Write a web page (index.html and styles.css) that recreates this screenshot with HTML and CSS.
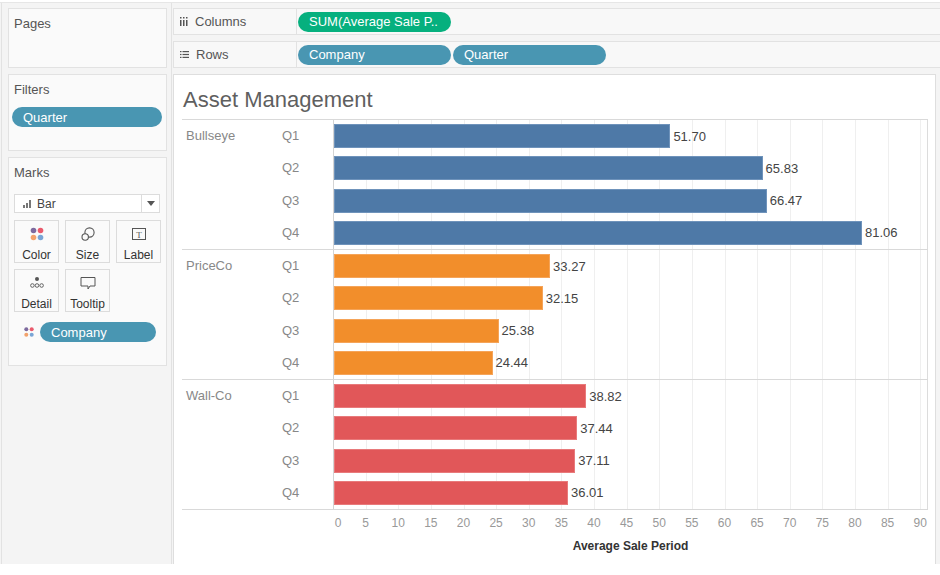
FILE: index.html
```html
<!DOCTYPE html>
<html lang="en">
<head>
    <meta charset="UTF-8">
    <title>Asset Management</title>
    <link rel="stylesheet" href="styles.css">
</head>
<body>
    <div class="app">
        <aside class="sidebar">
            <section class="card pages">
                <h3>Pages</h3>
            </section>
            <section class="card filters">
                <h3>Filters</h3>
                <div class="pill dim filter-pill">Quarter</div>
            </section>
            <section class="card marks">
                <h3>Marks</h3>
                <div class="mark-type">
                    <svg class="mt-icon" width="10" height="8" viewBox="0 0 10 8">
                        <rect x="0" y="5" width="2" height="3" fill="#777"/>
                        <rect x="3" y="3" width="2" height="5" fill="#777"/>
                        <rect x="6" y="0" width="2" height="8" fill="#777"/>
                    </svg>
                    <span class="mt-name">Bar</span>
                    <span class="mt-caret"><svg width="8" height="5" viewBox="0 0 8 5"><path d="M0 0H8L4 5Z" fill="#555"/></svg></span>
                </div>
                <div class="mark-btns">
                    <div class="mbtn">
                        <svg width="14" height="14" viewBox="0 0 14 14">
                            <circle cx="3.5" cy="3.5" r="2.8" fill="#7d6a9e"/>
                            <circle cx="10.5" cy="3.5" r="2.8" fill="#ea5a6c"/>
                            <circle cx="3.5" cy="10.5" r="2.8" fill="#f2a26c"/>
                            <circle cx="10.5" cy="10.5" r="2.8" fill="#79a5d6"/>
                        </svg>
                        <span>Color</span>
                    </div>
                    <div class="mbtn">
                        <svg width="14" height="14" viewBox="0 0 14 14">
                            <circle cx="8.5" cy="5.5" r="4.6" fill="none" stroke="#555" stroke-width="1.1"/>
                            <circle cx="4.2" cy="10" r="3.2" fill="#fafafa" stroke="#555" stroke-width="1.1"/>
                        </svg>
                        <span>Size</span>
                    </div>
                    <div class="mbtn">
                        <svg width="14" height="14" viewBox="0 0 14 14">
                            <rect x="0.5" y="1.5" width="13" height="11" fill="none" stroke="#555" stroke-width="1"/>
                            <text x="7" y="10.5" text-anchor="middle" font-family="Liberation Serif, serif" font-size="9" fill="#555">T</text>
                        </svg>
                        <span>Label</span>
                    </div>
                    <div class="mbtn">
                        <svg width="14" height="14" viewBox="0 0 14 14">
                            <circle cx="7" cy="3" r="2" fill="#555"/>
                            <circle cx="2.4" cy="9.5" r="1.8" fill="none" stroke="#555" stroke-width="0.9"/>
                            <circle cx="7" cy="9.5" r="1.8" fill="none" stroke="#555" stroke-width="0.9"/>
                            <circle cx="11.6" cy="9.5" r="1.8" fill="none" stroke="#555" stroke-width="0.9"/>
                        </svg>
                        <span>Detail</span>
                    </div>
                    <div class="mbtn">
                        <svg width="16" height="14" viewBox="0 0 16 14">
                            <path d="M1 1.5H15V10H10L8 13V10H1Z" fill="none" stroke="#555" stroke-width="1" stroke-linejoin="round"/>
                        </svg>
                        <span>Tooltip</span>
                    </div>
                </div>
                <div class="mark-field">
                    <svg width="10" height="10" viewBox="0 0 10 10">
                        <circle cx="2.3" cy="2.3" r="2" fill="#7d6a9e"/>
                        <circle cx="7.7" cy="2.3" r="2" fill="#ea5a6c"/>
                        <circle cx="2.3" cy="7.7" r="2" fill="#f2a26c"/>
                        <circle cx="7.7" cy="7.7" r="2" fill="#79a5d6"/>
                    </svg>
                    <div class="pill dim field-pill">Company</div>
                </div>
            </section>
        </aside>

        <main class="main">
            <div class="shelf">
                <div class="shelf-label">
                    <svg width="8" height="9" viewBox="0 0 8 9">
                        <rect x="0" y="0" width="1.5" height="1.5" fill="#555"/>
                        <rect x="0" y="3" width="1.5" height="6" fill="#555"/>
                        <rect x="3" y="0" width="1.5" height="1.5" fill="#555"/>
                        <rect x="3" y="3" width="1.5" height="6" fill="#555"/>
                        <rect x="6" y="0" width="1.5" height="1.5" fill="#555"/>
                        <rect x="6" y="3" width="1.5" height="6" fill="#555"/>
                    </svg>
                    <span>Columns</span>
                </div>
                <div class="shelf-pills">
                    <span class="pill measure">SUM(Average Sale P..</span>
                </div>
            </div>
            <div class="shelf">
                <div class="shelf-label">
                    <svg width="9" height="7" viewBox="0 0 9 7">
                        <rect x="0" y="0" width="1.5" height="1.2" fill="#555"/>
                        <rect x="2.5" y="0" width="6.5" height="1.2" fill="#555"/>
                        <rect x="0" y="2.9" width="1.5" height="1.2" fill="#555"/>
                        <rect x="2.5" y="2.9" width="6.5" height="1.2" fill="#555"/>
                        <rect x="0" y="5.8" width="1.5" height="1.2" fill="#555"/>
                        <rect x="2.5" y="5.8" width="6.5" height="1.2" fill="#555"/>
                    </svg>
                    <span>Rows</span>
                </div>
                <div class="shelf-pills">
                    <span class="pill dim">Company</span>
                    <span class="pill dim">Quarter</span>
                </div>
            </div>

            <div class="sheet">
                <h1 class="title">Asset Management</h1>
                <div class="viz">
                    <div class="group blue">
                        <div class="company">Bullseye</div>
                        <div class="quarter">Q1</div>
                        <div class="plot"><div class="bar" style="width: 336.4px"></div><span class="val">51.70</span></div>
                        <div class="quarter">Q2</div>
                        <div class="plot"><div class="bar" style="width: 428.6px"></div><span class="val">65.83</span></div>
                        <div class="quarter">Q3</div>
                        <div class="plot"><div class="bar" style="width: 432.8px"></div><span class="val">66.47</span></div>
                        <div class="quarter">Q4</div>
                        <div class="plot"><div class="bar" style="width: 528px"></div><span class="val">81.06</span></div>
                    </div>
                    <div class="group orange">
                        <div class="company">PriceCo</div>
                        <div class="quarter">Q1</div>
                        <div class="plot"><div class="bar" style="width: 216.1px"></div><span class="val">33.27</span></div>
                        <div class="quarter">Q2</div>
                        <div class="plot"><div class="bar" style="width: 208.8px"></div><span class="val">32.15</span></div>
                        <div class="quarter">Q3</div>
                        <div class="plot"><div class="bar" style="width: 164.6px"></div><span class="val">25.38</span></div>
                        <div class="quarter">Q4</div>
                        <div class="plot"><div class="bar" style="width: 158.5px"></div><span class="val">24.44</span></div>
                    </div>
                    <div class="group red">
                        <div class="company">Wall-Co</div>
                        <div class="quarter">Q1</div>
                        <div class="plot"><div class="bar" style="width: 252.3px"></div><span class="val">38.82</span></div>
                        <div class="quarter">Q2</div>
                        <div class="plot"><div class="bar" style="width: 243.3px"></div><span class="val">37.44</span></div>
                        <div class="quarter">Q3</div>
                        <div class="plot"><div class="bar" style="width: 241.2px"></div><span class="val">37.11</span></div>
                        <div class="quarter">Q4</div>
                        <div class="plot"><div class="bar" style="width: 234px"></div><span class="val">36.01</span></div>
                    </div>
                </div>
                <div class="axis">
                    <span class="tick first">0</span>
                    <span class="tick">5</span>
                    <span class="tick">10</span>
                    <span class="tick">15</span>
                    <span class="tick">20</span>
                    <span class="tick">25</span>
                    <span class="tick">30</span>
                    <span class="tick">35</span>
                    <span class="tick">40</span>
                    <span class="tick">45</span>
                    <span class="tick">50</span>
                    <span class="tick">55</span>
                    <span class="tick">60</span>
                    <span class="tick">65</span>
                    <span class="tick">70</span>
                    <span class="tick">75</span>
                    <span class="tick">80</span>
                    <span class="tick">85</span>
                    <span class="tick">90</span>
                </div>
                <div class="axis-title">Average Sale Period</div>
            </div>
        </main>
    </div>
</body>
</html>
```

FILE: styles.css
```css
body {
    margin: 0;
    background-color: #fff;
    font-family: "Liberation Sans", Arial, sans-serif;
    font-size: 13px;
    color: #555;
}
.app {
    display: flex;
    height: 562px;
    margin-top: 2px;
    border-top: 1px solid #e6e6e6;
    background-color: #f4f4f4;
    box-sizing: border-box;
}

/* left column */
.sidebar {
    flex: 0 0 171px;
    margin-left: 1px;
    padding: 5px 4px 0 6px;
    border-left: 1px solid #e2e2e2;
    border-right: 1px solid #e2e2e2;
    box-sizing: border-box;
    display: flex;
    flex-direction: column;
    gap: 6px;
}
.card {
    background-color: #fafafa;
    border: 1px solid #e2e2e2;
    box-sizing: border-box;
}
.card h3 {
    margin: 0;
    padding: 7px 5px 0;
    font-size: 13px;
    font-weight: normal;
    line-height: 16px;
    color: #555;
}
.pages {
    height: 60px;
}
.filters {
    height: 77px;
}
.marks {
    height: 209px;
}

.pill {
    display: inline-flex;
    align-items: center;
    height: 20px;
    width: 153px;
    padding-left: 11px;
    border-radius: 10px;
    box-sizing: border-box;
    color: #fff;
    font-size: 13px;
    white-space: nowrap;
}
.pill.dim {
    background-color: #4996b2;
}
.pill.measure {
    background-color: #06b07e;
}
.filter-pill {
    display: flex;
    width: 150px;
    margin: 9px 0 0 3px;
}

.mark-type {
    display: flex;
    align-items: center;
    height: 19px;
    width: 146px;
    margin: 13px 0 0 5px;
    background-color: #fff;
    border: 1px solid #dcdcdc;
    box-sizing: border-box;
}
.mt-icon {
    margin-left: 8px;
}
.mt-name {
    flex: 1;
    margin-left: 4px;
    color: #444;
    font-size: 12px;
}
.mt-caret {
    display: flex;
    align-items: center;
    justify-content: center;
    width: 17px;
    height: 100%;
    border-left: 1px solid #dcdcdc;
}

.mark-btns {
    display: grid;
    grid-template-columns: repeat(3, 45px);
    grid-auto-rows: 43px;
    gap: 6px;
    margin: 7px 0 0 5px;
}
.mbtn {
    display: flex;
    flex-direction: column;
    align-items: center;
    padding-top: 6px;
    background-color: #fafafa;
    border: 1px solid #dcdcdc;
    box-sizing: border-box;
}
.mbtn svg {
    height: 14px;
    margin-bottom: 7px;
}
.mbtn span {
    font-size: 12px;
    line-height: 14px;
    color: #333;
}

.mark-field {
    display: flex;
    align-items: center;
    margin: 10px 0 0 15px;
    gap: 6px;
}
.field-pill {
    width: 116px;
    margin-left: 0;
}

/* main area */
.main {
    flex: 1 1 auto;
    min-width: 0;
    display: flex;
    flex-direction: column;
    gap: 6px;
    padding: 5px 0 0 1px;
}
.shelf {
    display: flex;
    height: 27px;
    background-color: #f8f8f8;
    border: 1px solid #e2e2e2;
    border-right: none;
    box-sizing: border-box;
}
.shelf-label {
    display: flex;
    align-items: center;
    gap: 7px;
    width: 123px;
    padding-left: 6px;
    border-right: 1px solid #e2e2e2;
    box-sizing: border-box;
    color: #555;
}
.shelf-pills {
    display: flex;
    align-items: center;
    gap: 2px;
    padding-left: 1px;
}

.sheet {
    flex: 1;
    margin-right: 4px;
    padding-left: 8px;
    background-color: #fff;
    border: 1px solid #dedede;
    border-bottom: none;
}
.title {
    margin: 0;
    padding: 12px 0 0 1px;
    height: 25px;
    margin-bottom: 7px;
    font-size: 22px;
    font-weight: normal;
    line-height: 25px;
    color: #5f5f5f;
}

.viz {
    width: 746px;
    border-top: 1px solid #d9d9d9;
}
.group {
    display: grid;
    grid-template-columns: 96px 55px 595px;
    grid-template-rows: repeat(4, 32.25px);
    border-bottom: 1px solid #d9d9d9;
}
.company,
.quarter {
    padding-left: 4px;
    line-height: 32.25px;
    color: #888;
    font-size: 13px;
}
.company {
    grid-row: span 4;
}
.plot {
    display: flex;
    align-items: center;
    border-left: 1px solid #d4d4d4;
    border-right: 1px solid #dcdcdc;
    background: repeating-linear-gradient(90deg, transparent 0 31.63px, #efefef 31.63px 32.63px);
}
.bar {
    height: 24px;
    box-sizing: border-box;
}
.blue .bar {
    background-color: #4e79a7;
    border: 1px solid #6f93bb;
}
.orange .bar {
    background-color: #f28e2b;
    border: 1px solid #f5a459;
}
.red .bar {
    background-color: #e15759;
    border: 1px solid #e87a7b;
}
.val {
    margin-left: 3px;
    color: #444;
    font-size: 13px;
}

.axis {
    display: flex;
    margin: 5px 0 0 134.7px;
}
.tick {
    flex: 0 0 32.63px;
    text-align: center;
    font-size: 12px;
    line-height: 16px;
    color: #999;
}
.tick.first {
    padding-left: 10px;
    box-sizing: border-box;
}
.axis-title {
    width: 595px;
    margin: 7px 0 0 151px;
    text-align: center;
    font-size: 12px;
    font-weight: bold;
    line-height: 16px;
    color: #333;
}
```
